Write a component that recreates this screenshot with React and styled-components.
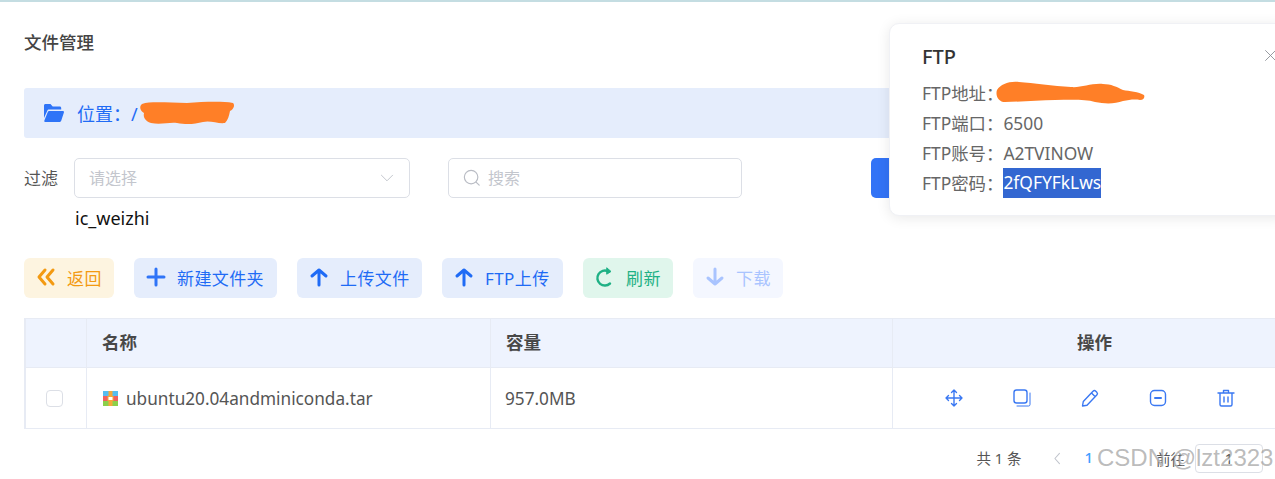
import styled, { createGlobalStyle } from 'styled-components'

const GlobalStyle = createGlobalStyle`
  html, body {
    margin: 0;
    padding: 0;
    background: #fff;
    overflow: hidden;
    font-family: "Noto Sans", "Noto Sans CJK SC", sans-serif;
  }
`

const Shell = styled.div`
  position: relative;
  width: 1275px;
  height: 479px;
  overflow: hidden;
`

const TopLine = styled.div`
  height: 2px;
  background: #c4dde2;
`

const Page = styled.div`
  width: 1272px;
  padding: 0 0 0 24px;
`

const Title = styled.h1`
  margin: 0;
  height: 86px;
  line-height: 80px;
  font-size: 17.5px;
  font-weight: 500;
  color: #444;
`

const LocationBar = styled.div`
  display: flex;
  align-items: center;
  height: 50px;
  padding-left: 20px;
  border-radius: 3px;
  background: #e5edfc;
  color: #1f6bf5;
  font-size: 18px;
`

const LocationText = styled.span`
  margin-left: 13px;
`

const FilterRow = styled.div`
  display: flex;
  align-items: center;
  margin-top: 20px;
  height: 40px;
`

const FilterLabel = styled.label`
  width: 50px;
  padding-bottom: 2px;
  font-size: 17px;
  color: #555;
`

const Field = styled.div`
  box-sizing: border-box;
  display: flex;
  align-items: center;
  width: ${(p) => p.$width}px;
  height: 40px;
  margin-right: ${(p) => p.$gap || 0}px;
  padding: 0 15px 0 14px;
  border: 1px solid #dcdfe6;
  border-radius: 5px;
  font-size: 16px;
  color: #c3c6cd;
`

const FieldText = styled.span`
  flex: 1;
  padding-bottom: 3px;
  margin-left: ${(p) => p.$indent || 0}px;
`

const QueryButton = styled.button`
  width: 90px;
  height: 40px;
  border: none;
  border-radius: 5px;
  background: #3273f6;
  color: #fff;
`

const Hint = styled.div`
  margin: 9px 0 0 51px;
  height: 22px;
  line-height: 22px;
  font-size: 18px;
  color: #111;
`

const Toolbar = styled.div`
  display: flex;
  gap: 20px;
  margin-top: 29px;
`

const tones = {
  yellow: { bg: '#fdf4e0', fg: '#f39a12' },
  blue: { bg: '#e5edfc', fg: '#1f6bf5' },
  green: { bg: '#e0f6ec', fg: '#1fb185' },
  off: { bg: '#f4f7ff', fg: '#a9c4ff' },
}

const ToolButton = styled.button`
  box-sizing: border-box;
  display: flex;
  align-items: center;
  gap: 11px;
  width: ${(p) => p.$width}px;
  height: 40px;
  padding: 0 0 2px 12px;
  border: none;
  border-radius: 6px;
  font-family: inherit;
  font-size: 17px;
  letter-spacing: 0.4px;
  white-space: nowrap;
  background: ${(p) => tones[p.$tone].bg};
  color: ${(p) => tones[p.$tone].fg};
`

const Table = styled.div`
  margin-top: 20px;
  border: 1px solid #e7ebf4;
  border-width: 1px 0 1px 1px;
  border-left-width: 2px;
`

const Row = styled.div`
  display: grid;
  grid-template-columns: 61px 404px 402px 1fr;
  height: ${(p) => (p.$head ? 48 : 60)}px;
  background: ${(p) => (p.$head ? '#eef3fe' : '#fff')};
  border-bottom: ${(p) => (p.$head ? '1px solid #e7ebf4' : 'none')};
  font-size: ${(p) => (p.$head ? 17.5 : 17.2)}px;
  font-weight: ${(p) => (p.$head ? 700 : 400)};
  color: ${(p) => (p.$head ? '#484848' : '#555')};
`

const Cell = styled.div`
  display: flex;
  align-items: center;
  justify-content: ${(p) => (p.$center ? 'center' : 'flex-start')};
  padding: 0 ${(p) => (p.$center ? 0 : 15)}px;
  padding-bottom: ${(p) => p.$lift || 0}px;
  border-right: 1px solid #e7ebf4;
  &:last-child {
    border-right: none;
  }
`

const Check = styled.span`
  box-sizing: border-box;
  width: 17px;
  height: 17px;
  margin-right: 4px;
  border: 1px solid #dcdfe6;
  border-radius: 4px;
  background: #fff;
`

const FileIcon = styled.svg`
  flex: none;
  margin-left: 1px;
`

const FileName = styled.span`
  margin-left: 8px;
`

const Size = styled.span`
  margin-left: -1px;
`

const Actions = styled.div`
  display: flex;
  gap: 48px;
  margin-right: 10px;
`

const Pager = styled.div`
  display: flex;
  align-items: center;
  justify-content: flex-end;
  height: 58px;
  padding-right: 33px;
  font-size: 14.5px;
  color: #555;
`

const Total = styled.span`
  padding-bottom: 2px;
`

const PrevArrow = styled.span`
  display: flex;
  margin: 0 20px 0 30px;
`

const PageNum = styled.span`
  padding-bottom: 2px;
  color: #409eff;
  font-size: 15px;
  font-weight: 500;
`

const GoLabel = styled.span`
  margin: 0 10px 0 63px;
`

const GoInput = styled.div`
  box-sizing: border-box;
  display: flex;
  align-items: center;
  justify-content: center;
  width: 68px;
  height: 29px;
  border: 1px solid #dcdfe6;
  border-radius: 4px;
`

const Popover = styled.div`
  position: absolute;
  top: 23px;
  left: 889px;
  box-sizing: border-box;
  width: 400px;
  height: 193px;
  padding: 17px 0 0 32px;
  background: #fff;
  border: 1px solid #f0f1f5;
  border-radius: 10px;
  box-shadow: 0 2px 14px rgba(0, 0, 0, 0.09);
`

const PopTitle = styled.div`
  height: 36px;
  line-height: 32px;
  font-size: 20px;
  font-weight: 500;
  color: #333;
`

const PopLine = styled.div`
  display: flex;
  align-items: center;
  height: 30px;
  font-size: 17.4px;
  color: #666;
`

const Selected = styled.span`
  display: inline-block;
  height: 30px;
  margin-top: 2px;
  line-height: 28px;
  background: #3367d1;
  color: #fff;
`

const Redacted = styled.span`
  display: flex;
  margin: 0 0 0 ${(p) => p.$shift || 0}px;
`

const Close = styled.span`
  position: absolute;
  top: 26px;
  left: 375px;
  display: flex;
`

const Watermark = styled.div`
  position: absolute;
  left: 1097px;
  top: 441px;
  font-family: "Liberation Sans", sans-serif;
  font-size: 24px;
  line-height: 34px;
  white-space: nowrap;
  color: rgba(130, 130, 130, 0.55);
  text-shadow: 1px 1px 1px rgba(255, 255, 255, 0.8);
`

const Scribble = ({ w, h, d }) => (
  <svg width={w} height={h} viewBox={`0 0 ${w} ${h}`} style={{ flex: 'none' }}>
    <path d={d} fill="#ff7f27" />
  </svg>
)

const Ico = ({ size = 20, color = 'currentColor', sw = 3, children }) => (
  <svg width={size} height={size} viewBox="0 0 20 20" fill="none" stroke={color} strokeWidth={sw} strokeLinecap="round" strokeLinejoin="round" style={{ flex: 'none' }}>
    {children}
  </svg>
)

const blue = '#3a78f2'

const App = () => {
  return (
    <Shell>
      <GlobalStyle />
      <TopLine />
      <Page>
        <Title>文件管理</Title>
        <LocationBar>
          <svg width="20" height="18" viewBox="0 0 20 18" style={{ flex: 'none' }}>
            <path d="M0 1.5C0 .6.6 0 1.5 0h5l2.2 2.5h7c.9 0 1.5.6 1.5 1.5v1.5H5.2c-1 0-1.7.5-2 1.4L0 14Z" fill="#2f74f7" />
            <path d="M5.6 7h13.2c.9 0 1.4.8 1.1 1.6l-2.6 7.9c-.3.9-.9 1.5-1.9 1.5H1.2c-.8 0-1.1-.5-.9-1.2L3.6 8.4C4 7.5 4.6 7 5.6 7Z" fill="#2f74f7" />
          </svg>
          <LocationText>位置：/</LocationText>
          <Redacted $shift={-1}>
            <Scribble w={98} h={24} d="M5 3C14 0 32 2 50 2c16-1 34-2 46 0 2 2 1 6-3 8-1 5-2 9-5 12-7 1-15-3-22-1-8 2-16 3-26 1-8-1-16 2-26 0C8 20 6 16 7 12 3 10 2 5 5 3Z" />
          </Redacted>
        </LocationBar>
        <FilterRow>
          <FilterLabel>过滤</FilterLabel>
          <Field $width={336} $gap={38}>
            <FieldText>请选择</FieldText>
            <Ico size={14} color="#c3c6cd" sw={1.4}>
              <path d="M2 6l8 8 8-8" />
            </Ico>
          </Field>
          <Field $width={294} $gap={129}>
            <Ico size={18} color="#b9bcc4" sw={1.3}>
              <circle cx="9" cy="9" r="7.5" />
              <path d="M14.5 14.5L18 18" />
            </Ico>
            <FieldText $indent={7}>搜索</FieldText>
          </Field>
          <QueryButton />
        </FilterRow>
        <Hint>ic_weizhi</Hint>
        <Toolbar>
          <ToolButton $tone="yellow" $width={90}>
            <Ico>
              <path d="M9 3L3 10l6 7M17 3l-6 7 6 7" />
            </Ico>
            返回
          </ToolButton>
          <ToolButton $tone="blue" $width={143}>
            <Ico color="#2f74f7">
              <path d="M10 2v16M2 10h16" />
            </Ico>
            新建文件夹
          </ToolButton>
          <ToolButton $tone="blue" $width={125}>
            <Ico color="#1f6bf5">
              <path d="M10 18V3M3 9l7-6 7 6" />
            </Ico>
            上传文件
          </ToolButton>
          <ToolButton $tone="blue" $width={121}>
            <Ico color="#1f6bf5">
              <path d="M10 18V3M3 9l7-6 7 6" />
            </Ico>
            FTP上传
          </ToolButton>
          <ToolButton $tone="green" $width={90}>
            <Ico sw={2.4}>
              <path d="M15 16.5A7.5 7.5 0 1 1 13 4.2" />
              <path d="M12 1l4 3.5-4 2.5z" fill="currentColor" strokeWidth="1" />
            </Ico>
            刷新
          </ToolButton>
          <ToolButton $tone="off" $width={90}>
            <Ico>
              <path d="M10 2v15M3 11l7 6 7-6" />
            </Ico>
            下载
          </ToolButton>
        </Toolbar>
        <Table>
          <Row $head>
            <Cell />
            <Cell $lift={4}>名称</Cell>
            <Cell $lift={4}>容量</Cell>
            <Cell $center $lift={4}>操作</Cell>
          </Row>
          <Row>
            <Cell $center>
              <Check />
            </Cell>
            <Cell>
              <FileIcon width="15" height="15" viewBox="0 0 15 15">
                <rect width="15" height="5" fill="#55bdf0" />
                <rect y="5" width="15" height="5" fill="#f0605f" />
                <rect y="10" width="15" height="5" fill="#8cd04a" />
                <rect x="5.5" width="4" height="15" fill="#f5a93a" />
                <rect x="5" y="5.5" width="5" height="4" fill="#fff" stroke="#f5a93a" />
              </FileIcon>
              <FileName>ubuntu20.04andminiconda.tar</FileName>
            </Cell>
            <Cell>
              <Size>957.0MB</Size>
            </Cell>
            <Cell $center>
              <Actions>
                <Ico color={blue} sw={1.4}>
                  <path d="M10 2v16M2 10h16M7.5 4.5L10 2l2.5 2.5M7.5 15.5L10 18l2.5-2.5M4.5 7.5L2 10l2.5 2.5M15.5 7.5L18 10l-2.5 2.5" />
                </Ico>
                <Ico color={blue} sw={1.4}>
                  <rect x="2" y="2" width="13" height="13" rx="2.5" />
                  <path d="M18 5v11.5a1.5 1.5 0 0 1-1.5 1.5H5" strokeWidth="1" />
                </Ico>
                <Ico color={blue} sw={1.4}>
                  <path d="M2.5 18l.8-4.5L13 3.2a2 2 0 0 1 2.8 0l1 1a2 2 0 0 1 0 2.8L7 17.2 2.5 18ZM11.5 5l3.5 3.5" />
                </Ico>
                <Ico color={blue} sw={1.4}>
                  <rect x="2.5" y="2.5" width="15" height="15" rx="4" />
                  <path d="M7 10h6" strokeWidth="2" />
                </Ico>
                <Ico color={blue} sw={1.4}>
                  <path d="M2 5h16M7.5 5V2.5h5V5M4 5v11.5A1.5 1.5 0 0 0 5.5 18h9a1.5 1.5 0 0 0 1.5-1.5V5M8 9v5M12 9v5" />
                </Ico>
              </Actions>
            </Cell>
          </Row>
        </Table>
        <Pager>
          <Total>共 1 条</Total>
          <PrevArrow>
            <Ico size={13} color="#c0c4cc" sw={1.6}>
              <path d="M13 2L6 10l7 8" />
            </Ico>
          </PrevArrow>
          <PageNum>1</PageNum>
          <GoLabel>前往</GoLabel>
          <GoInput>1</GoInput>
        </Pager>
      </Page>
      <Popover>
        <PopTitle>FTP</PopTitle>
        <PopLine>
          FTP地址：
          <Redacted $shift={-8}>
            <Scribble w={150} h={23} d="M2 9C6 3 14 0 24 1c14 1 34 4 52 5 10 1 20-4 32-3 8 0 14 3 20 6 6 1 16 2 21 5 1 2 0 5-4 5-6-1-11 0-17 1-8 3-18 3-28 1-10-3-26-2-40-2-16 0-36 2-50 2C4 21 0 15 2 9Z" />
          </Redacted>
        </PopLine>
        <PopLine>FTP端口：6500</PopLine>
        <PopLine>FTP账号：A2TVINOW</PopLine>
        <PopLine>
          FTP密码：<Selected>2fQFYFkLws</Selected>
        </PopLine>
        <Close>
          <Ico size={11} color="#8a8d94" sw={1.6}>
            <path d="M1 1l18 18M19 1L1 19" />
          </Ico>
        </Close>
      </Popover>
      <Watermark>CSDN @lzt23231</Watermark>
    </Shell>
  )
}

export default App
